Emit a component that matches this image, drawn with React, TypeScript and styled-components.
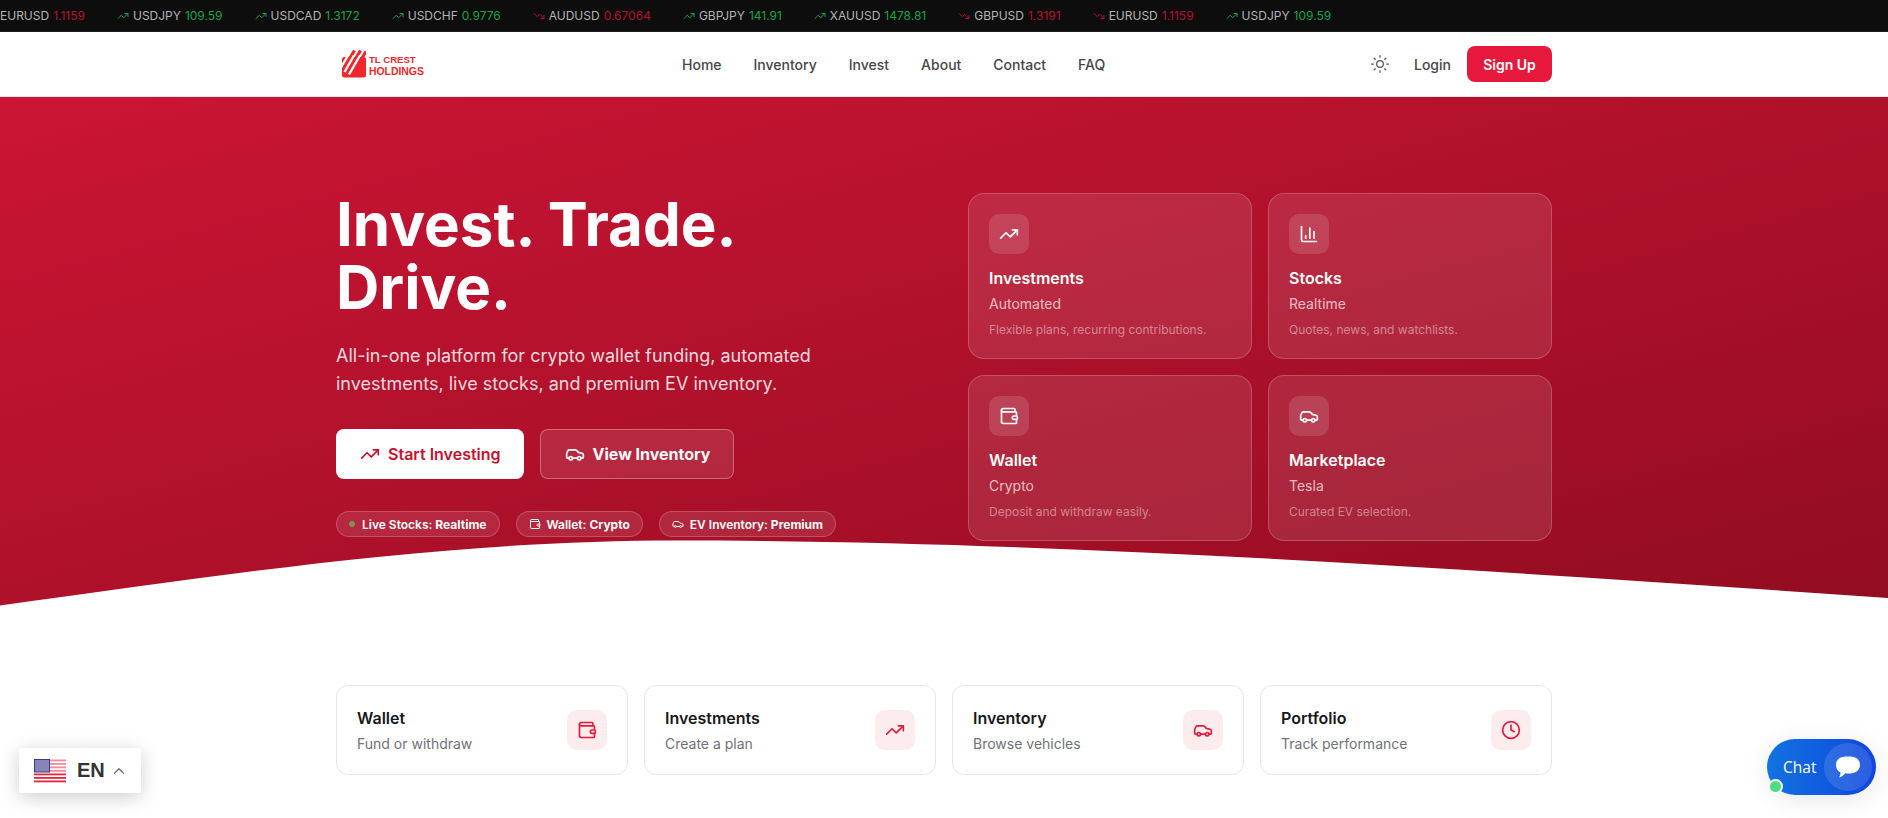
import React from "react";
import styled, { createGlobalStyle } from "styled-components";
import { TrendingUp, TrendingDown, Sun, Car, Wallet, ChartColumn, Clock, ChevronUp } from "lucide-react";

const Global = createGlobalStyle`
  html, body { margin: 0; padding: 0; background: #fff; overflow: hidden; height: 818px; }
  body { font-family: Inter, "Noto Sans", sans-serif; }
  * { box-sizing: border-box; }
`;

const Page = styled.div`
  position: relative;
  width: 1888px;
  height: 818px;
  overflow: hidden;
`;

const Ticker = styled.div`
  height: 32px;
  background: #0d0d0d;
  display: flex;
  align-items: center;
  gap: 32px;
  overflow: hidden;
  white-space: nowrap;
  font-size: 12px;
  border-bottom: 1px solid #1c1c1c;
`;

const TickItem = styled.span`
  display: inline-flex;
  align-items: center;
  gap: 4px;
  color: #b4b4b4;
`;

const TickValue = styled.span<{ $up: boolean }>`
  color: ${(p) => (p.$up ? "#16a34a" : "#b8112e")};
`;

const Header = styled.header`
  height: 65px;
  background: #fff;
  border-bottom: 1px solid #e8e8e8;
`;

const Container = styled.div`
  width: 1216px;
  margin: 0 auto;
`;

const HeaderRow = styled(Container)`
  height: 64px;
  display: flex;
  align-items: center;
`;

const Logo = styled.div`
  display: flex;
  align-items: center;
  gap: 3px;
  padding-left: 6px;
  width: 346px;
`;

const LogoText = styled.div`
  font-family: "Liberation Sans", Arial, sans-serif;
  font-weight: 700;
  color: #f1272c;
  line-height: 12px;
  white-space: nowrap;
  padding-top: 3px;
`;

const LogoLine = styled.div<{ $size: number }>`
  font-size: ${(p) => p.$size}px;
`;

const Nav = styled.nav`
  display: flex;
  gap: 32px;
  font-size: 14px;
  font-weight: 500;
  color: #45454c;
`;

const NavLink = styled.a``;

const HeaderActions = styled.div`
  margin-left: auto;
  display: flex;
  align-items: center;
  font-size: 14px;
  font-weight: 500;
  color: #45454c;
`;

const ThemeToggle = styled.span`
  display: inline-flex;
  color: #555;
  margin-right: 24px;
`;

const LoginLink = styled.a`
  margin-right: 16px;
`;

const SignUp = styled.a`
  height: 36px;
  width: 85px;
  border-radius: 8px;
  background: #e6193c;
  color: #fff;
  font-weight: 600;
  display: flex;
  align-items: center;
  justify-content: center;
`;

const Hero = styled.section`
  position: relative;
  height: 510px;
  background: linear-gradient(to bottom right, #cc1535 0%, #920c20 100%);
  overflow: hidden;
  color: #fff;
`;

const HeroGrid = styled(Container)`
  display: grid;
  grid-template-columns: 1fr 584px;
  column-gap: 48px;
  padding-top: 96px;
`;

const HeroLeft = styled.div``;

const Title = styled.h1`
  margin: 0;
  font-size: 60px;
  line-height: 63px;
  font-weight: 700;
  color: #fff;
`;

const Lead = styled.p`
  margin: 23px 0 0;
  font-size: 18px;
  line-height: 28px;
  color: rgba(255, 255, 255, 0.85);
  width: 520px;
`;

const Buttons = styled.div`
  display: flex;
  gap: 16px;
  margin-top: 31px;
`;

const HeroButton = styled.a<{ $solid?: boolean }>`
  height: 50px;
  padding: 0 23px 0 24px;
  border-radius: 8px;
  display: inline-flex;
  align-items: center;
  gap: 8px;
  font-size: 16px;
  font-weight: ${(p) => (p.$solid ? 600 : 700)};
  background: ${(p) => (p.$solid ? "#fff" : "rgba(255,255,255,0.1)")};
  color: ${(p) => (p.$solid ? "#c8102e" : "#fff")};
  border: ${(p) => (p.$solid ? "none" : "1px solid rgba(255,255,255,0.3)")};
`;

const Pills = styled.div`
  display: flex;
  gap: 16px;
  margin-top: 32px;
`;

const Pill = styled.span`
  height: 26px;
  padding: 0 12px;
  border-radius: 13px;
  display: inline-flex;
  align-items: center;
  gap: 6px;
  font-size: 12px;
  font-weight: 600;
  color: #fff;
  background: rgba(255, 255, 255, 0.1);
  border: 1px solid rgba(255, 255, 255, 0.2);
`;

const PillValue = styled.b`
  font-weight: 700;
`;

const PillLabel = styled.span``;

const Dot = styled.span`
  width: 6px;
  height: 6px;
  margin-right: 1px;
  border-radius: 50%;
  background: #7f8f5a;
`;

const FeatureGrid = styled.div`
  display: grid;
  grid-template-columns: 284px 284px;
  grid-auto-rows: 166px;
  gap: 16px;
`;

const FeatureCard = styled.div`
  border-radius: 16px;
  padding: 20px;
  background: rgba(255, 255, 255, 0.1);
  border: 1px solid rgba(255, 255, 255, 0.2);
`;

const FeatureIcon = styled.div`
  width: 40px;
  height: 40px;
  border-radius: 10px;
  background: rgba(255, 255, 255, 0.13);
  display: flex;
  align-items: center;
  justify-content: center;
`;

const FeatureTitle = styled.div`
  margin-top: 12px;
  font-size: 16px;
  line-height: 24px;
  font-weight: 600;
`;

const FeatureSub = styled.div`
  margin-top: 4px;
  font-size: 14px;
  line-height: 20px;
  color: rgba(255, 255, 255, 0.7);
`;

const FeatureDesc = styled.div`
  margin-top: 8px;
  font-size: 12px;
  line-height: 16px;
  color: rgba(255, 255, 255, 0.45);
`;

const Wave = styled.svg`
  position: absolute;
  left: 0;
  bottom: 0;
  display: block;
`;

const Quick = styled(Container)`
  display: grid;
  grid-template-columns: repeat(4, 292px);
  gap: 16px;
  margin-top: 78px;
`;

const QuickCard = styled.div`
  height: 90px;
  border: 1px solid #e7e7e9;
  border-radius: 12px;
  padding: 0 20px;
  display: flex;
  align-items: center;
  justify-content: space-between;
  background: #fff;
`;

const QuickText = styled.div``;

const QuickTitle = styled.div`
  font-size: 16px;
  line-height: 24px;
  font-weight: 600;
  color: #18181b;
`;

const QuickSub = styled.div`
  margin-top: 4px;
  font-size: 14px;
  line-height: 20px;
  color: #71717a;
`;

const QuickIcon = styled.div`
  width: 40px;
  height: 40px;
  border-radius: 10px;
  background: #fdecee;
  color: #e6193c;
  display: flex;
  align-items: center;
  justify-content: center;
`;

const Lang = styled.div`
  position: absolute;
  left: 19px;
  top: 748px;
  width: 122px;
  height: 45px;
  background: #fff;
  border-radius: 2px;
  box-shadow: 0 4px 20px rgba(0, 0, 0, 0.2);
  display: flex;
  align-items: center;
  padding-left: 15px;
  font-family: "Liberation Sans", Arial, sans-serif;
  font-size: 20px;
  font-weight: 700;
  color: #333;
`;

const LangCode = styled.span`
  margin-left: 11px;
`;

const LangChevron = styled.span`
  display: inline-flex;
  margin-left: 5px;
  color: #666;
`;

const Chat = styled.div`
  position: absolute;
  left: 1767px;
  top: 739px;
  width: 109px;
  height: 56px;
  border-radius: 28px;
  background: linear-gradient(90deg, #1173e0 0%, #1046de 100%);
  box-shadow: 0 4px 24px rgba(0, 0, 0, 0.1);
  display: flex;
  align-items: center;
  color: #fff;
  font-family: "Open Sans", "Noto Sans", sans-serif;
  font-size: 15.5px;
  padding-left: 16px;
`;

const ChatBubble = styled.div`
  position: absolute;
  right: 4px;
  top: 4px;
  width: 48px;
  height: 48px;
  border-radius: 50%;
  background: rgba(255, 255, 255, 0.12);
  display: flex;
  align-items: center;
  justify-content: center;
`;

const Online = styled.span`
  position: absolute;
  left: 1px;
  bottom: 1px;
  width: 15px;
  height: 15px;
  border-radius: 50%;
  background: #4ade80;
  border: 2px solid #fff;
`;

const ticks: [string, string, boolean][] = [
  ["EURUSD", "1.1159", false],
  ["USDJPY", "109.59", true],
  ["USDCAD", "1.3172", true],
  ["USDCHF", "0.9776", true],
  ["AUDUSD", "0.67064", false],
  ["GBPJPY", "141.91", true],
  ["XAUUSD", "1478.81", true],
  ["GBPUSD", "1.3191", false],
  ["EURUSD", "1.1159", false],
  ["USDJPY", "109.59", true],
];

const features = [
  { icon: <TrendingUp size={20} />, t: "Investments", s: "Automated", d: "Flexible plans, recurring contributions." },
  { icon: <ChartColumn size={20} />, t: "Stocks", s: "Realtime", d: "Quotes, news, and watchlists." },
  { icon: <Wallet size={20} />, t: "Wallet", s: "Crypto", d: "Deposit and withdraw easily." },
  { icon: <Car size={20} />, t: "Marketplace", s: "Tesla", d: "Curated EV selection." },
];

const quick = [
  { icon: <Wallet size={20} />, t: "Wallet", s: "Fund or withdraw" },
  { icon: <TrendingUp size={20} />, t: "Investments", s: "Create a plan" },
  { icon: <Car size={20} />, t: "Inventory", s: "Browse vehicles" },
  { icon: <Clock size={20} />, t: "Portfolio", s: "Track performance" },
];

const LogoMark = () => (
  <svg width="24" height="28" viewBox="0 0 24 28">
    <rect x="0" y="7" width="24" height="20.5" rx="2.5" fill="#f1272c" />
    <path d="M8 8 L12.5 0.5 M14 8 L18.5 0.5 M20 8 L24 1.5" stroke="#f1272c" strokeWidth="3.2" fill="none" />
    <path d="M6 5.5 L-1 17.5 M12 5.5 L2.5 22 M18 5.5 L7 24.5" stroke="#fff" strokeWidth="2.4" fill="none" />
  </svg>
);

const Flag = () => (
  <svg width="32" height="24" viewBox="0 0 32 24">
    <rect width="32" height="24" fill="#fff" />
    {[0, 1, 2, 3, 4, 5, 6].map((i) => (
      <rect key={i} y={i * 3.5 + 0.5} width="32" height="1.8" fill={i > 3 ? "#e8233a" : "#f58a98"} />
    ))}
    <rect x="0.5" y="0.5" width="15" height="12.5" fill="#8585b8" stroke="#3a3a86" />
  </svg>
);

export default function App() {
  return (
    <Page>
      <Global />
      <Ticker>
        {ticks.map(([n, v, up], i) => (
          <TickItem key={i}>
            {i > 0 &&
              (up ? <TrendingUp size={12} color="#16a34a" /> : <TrendingDown size={12} color="#b8112e" />)}
            {n} <TickValue $up={up}>{v}</TickValue>
          </TickItem>
        ))}
      </Ticker>
      <Header>
        <HeaderRow>
          <Logo>
            <LogoMark />
            <LogoText>
              <LogoLine $size={9.6}>TL CREST</LogoLine>
              <LogoLine $size={10.4}>HOLDINGS</LogoLine>
            </LogoText>
          </Logo>
          <Nav>
            {["Home", "Inventory", "Invest", "About", "Contact", "FAQ"].map((n) => (
              <NavLink key={n}>{n}</NavLink>
            ))}
          </Nav>
          <HeaderActions>
            <ThemeToggle>
              <Sun size={20} strokeWidth={1.5} />
            </ThemeToggle>
            <LoginLink>Login</LoginLink>
            <SignUp>Sign Up</SignUp>
          </HeaderActions>
        </HeaderRow>
      </Header>
      <Hero>
        <HeroGrid>
          <HeroLeft>
            <Title>
              Invest. Trade.
              <br />
              Drive.
            </Title>
            <Lead>All-in-one platform for crypto wallet funding, automated investments, live stocks, and premium EV inventory.</Lead>
            <Buttons>
              <HeroButton $solid>
                <TrendingUp size={20} />
                Start Investing
              </HeroButton>
              <HeroButton>
                <Car size={20} />
                View Inventory
              </HeroButton>
            </Buttons>
            <Pills>
              <Pill>
                <Dot />
                <PillLabel>
                  Live Stocks: <PillValue>Realtime</PillValue>
                </PillLabel>
              </Pill>
              <Pill>
                <Wallet size={12} />
                <PillLabel>
                  Wallet: <PillValue>Crypto</PillValue>
                </PillLabel>
              </Pill>
              <Pill>
                <Car size={12} />
                <PillLabel>
                  EV Inventory: <PillValue>Premium</PillValue>
                </PillLabel>
              </Pill>
            </Pills>
          </HeroLeft>
          <FeatureGrid>
            {features.map((f) => (
              <FeatureCard key={f.t}>
                <FeatureIcon>{f.icon}</FeatureIcon>
                <FeatureTitle>{f.t}</FeatureTitle>
                <FeatureSub>{f.s}</FeatureSub>
                <FeatureDesc>{f.d}</FeatureDesc>
              </FeatureCard>
            ))}
          </FeatureGrid>
        </HeroGrid>
        <Wave width="1888" height="70" viewBox="0 0 1888 70">
          <path d="M0 68.5 C 250 34 450 3.5 680 3.5 C 1050 3.5 1480 33 1888 61 V70 H0 Z" fill="#fff" />
        </Wave>
      </Hero>
      <Quick>
        {quick.map((q) => (
          <QuickCard key={q.t}>
            <QuickText>
              <QuickTitle>{q.t}</QuickTitle>
              <QuickSub>{q.s}</QuickSub>
            </QuickText>
            <QuickIcon>{q.icon}</QuickIcon>
          </QuickCard>
        ))}
      </Quick>
      <Lang>
        <Flag />
        <LangCode>EN</LangCode>
        <LangChevron>
          <ChevronUp size={18} strokeWidth={1.5} />
        </LangChevron>
      </Lang>
      <Chat>
        Chat
        <ChatBubble>
          <svg width="26" height="24" viewBox="0 0 26 24">
            <path d="M13 1.5C20 1.5 25 3.5 25 10 25 16 20 18.5 13 18.5 12 18.5 11 18.4 10.2 18.3 8.5 20.5 6.5 22 3.8 22.6 5 21 5.6 19.3 5.6 17.5 2.5 16 1 13.5 1 10 1 3.5 6 1.5 13 1.5Z" fill="#fff" />
          </svg>
        </ChatBubble>
        <Online />
      </Chat>
    </Page>
  );
}
